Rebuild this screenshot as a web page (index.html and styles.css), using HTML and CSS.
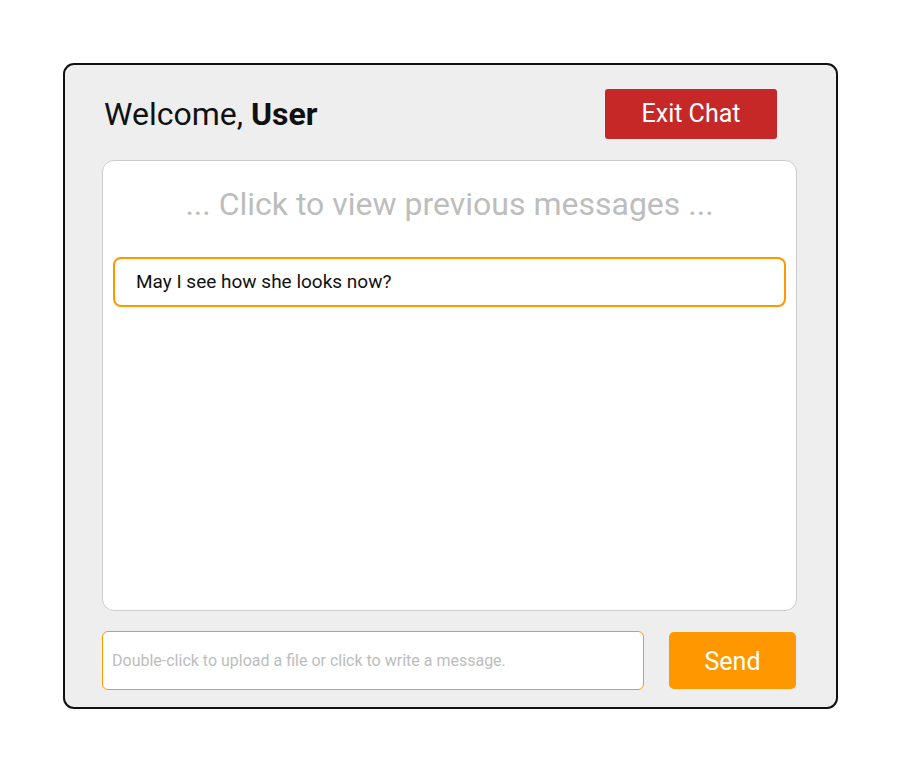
FILE: index.html
```html
<!DOCTYPE html>
<html lang="en">
<head>
  <meta charset="UTF-8" />
  <meta name="viewport" content="width=device-width, initial-scale=1.0"/>
  <title>Chat</title>
  <link rel="stylesheet" href="styles.css">
</head>
<body>
  <div class="chat">
    <div class="chat-header">
      <h2>Welcome, <b>User</b></h2>
      <button class="exit-btn">Exit Chat</button>
    </div>

    <div class="messages">
      <div class="history">... Click to view previous messages ...</div>
      <div class="msg">May I see how she looks now?</div>
    </div>

    <div class="composer">
      <div class="input">Double-click to upload a file or click to write a message.</div>
      <button class="send-btn">Send</button>
    </div>
  </div>
</body>
</html>
```

FILE: styles.css
```css
body { margin: 0; font-family: Roboto, "Liberation Sans", sans-serif; background: #fff; }
.chat { box-sizing: border-box; width: 775px; height: 646px; margin: 63px 0 0 63px; background: #eeeeee; border: 2px solid #111; border-radius: 11px; padding: 24px 39px 17px 37px; display: flex; flex-direction: column; }
.chat-header { display: flex; justify-content: space-between; align-items: center; height: 50px; }
.chat-header h2 { margin: 0 0 0 2px; font-size: 32px; font-weight: 400; color: #111; }
.chat-header b { font-weight: 700; }
.exit-btn { width: 172px; height: 50px; margin-right: 20px; padding-bottom: 2px; background: #c62828; color: #fff; border: none; border-radius: 3px; font-family: inherit; font-size: 25px; cursor: pointer; }
.messages { box-sizing: border-box; height: 451px; margin-top: 21px; background: #fff; border: 1px solid #cccccc; border-radius: 12px; padding: 23px 10px 0 10px; }
.history { text-align: center; font-size: 32px; color: #bdbdbd; line-height: 40px; cursor: pointer; }
.msg { box-sizing: border-box; height: 50px; margin-top: 33px; border: 2px solid #ff9800; border-radius: 8px; padding: 0 21px 2px; display: flex; align-items: center; font-size: 19px; color: #111; }
.composer { display: flex; align-items: center; gap: 25px; margin-top: 20px; }
.input { box-sizing: border-box; width: 542px; height: 59px; background: #fff; border: 1px solid #ff9800; border-radius: 6px; padding: 0 9px; display: flex; align-items: center; font-size: 16px; color: #bdbdbd; }
.send-btn { width: 127px; height: 57px; padding-top: 2px; background: #ff9800; color: #fff; border: none; border-radius: 5px; font-family: inherit; font-size: 25px; cursor: pointer; }
```
